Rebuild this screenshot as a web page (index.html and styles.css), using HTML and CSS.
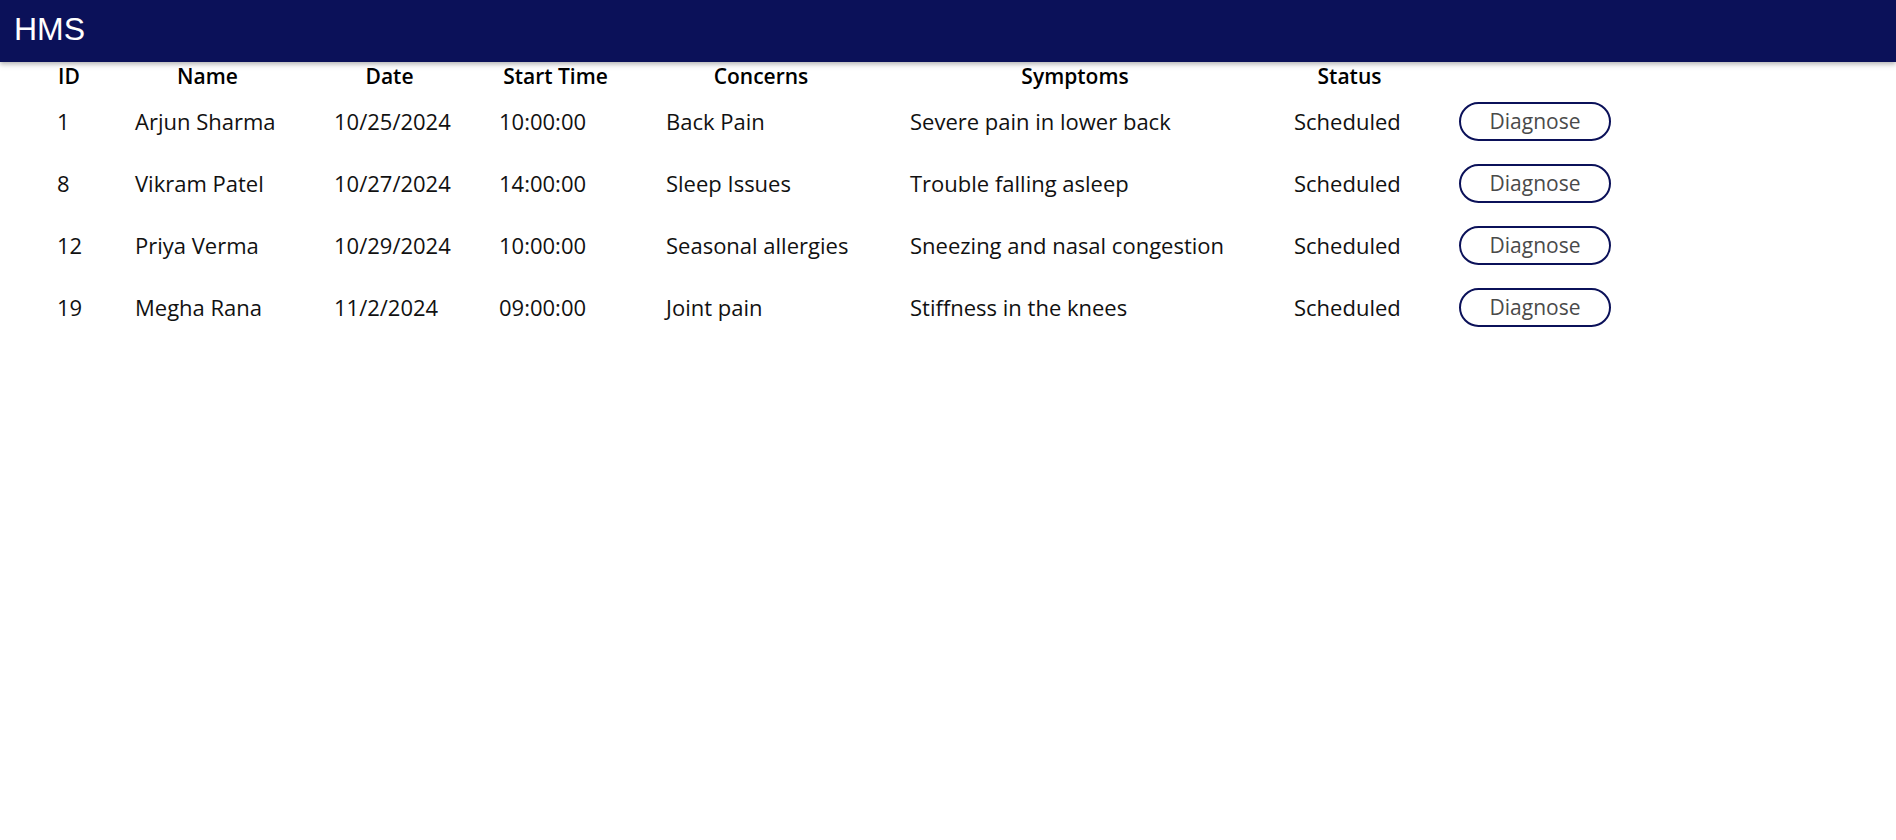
FILE: index.html
```html
<!DOCTYPE html>
<html lang="en">
<head>
<meta charset="utf-8">
<title>HMS</title>
<link rel="stylesheet" href="styles.css">
</head>
<body>
<header class="appbar">
  <span class="brand">HMS</span>
</header>
<main class="content">
  <table class="appts">
    <colgroup>
      <col class="c-id">
      <col class="c-name">
      <col class="c-date">
      <col class="c-time">
      <col class="c-concern">
      <col class="c-symptom">
      <col class="c-status">
      <col class="c-action">
    </colgroup>
    <thead>
      <tr>
        <th>ID</th>
        <th>Name</th>
        <th>Date</th>
        <th>Start Time</th>
        <th>Concerns</th>
        <th>Symptoms</th>
        <th>Status</th>
        <th></th>
      </tr>
    </thead>
    <tbody>
      <tr>
        <td>1</td>
        <td>Arjun Sharma</td>
        <td>10/25/2024</td>
        <td>10:00:00</td>
        <td>Back Pain</td>
        <td>Severe pain in lower back</td>
        <td>Scheduled</td>
        <td><button class="diag">Diagnose</button></td>
      </tr>
      <tr>
        <td>8</td>
        <td>Vikram Patel</td>
        <td>10/27/2024</td>
        <td>14:00:00</td>
        <td>Sleep Issues</td>
        <td>Trouble falling asleep</td>
        <td>Scheduled</td>
        <td><button class="diag">Diagnose</button></td>
      </tr>
      <tr>
        <td>12</td>
        <td>Priya Verma</td>
        <td>10/29/2024</td>
        <td>10:00:00</td>
        <td>Seasonal allergies</td>
        <td>Sneezing and nasal congestion</td>
        <td>Scheduled</td>
        <td><button class="diag">Diagnose</button></td>
      </tr>
      <tr>
        <td>19</td>
        <td>Megha Rana</td>
        <td>11/2/2024</td>
        <td>09:00:00</td>
        <td>Joint pain</td>
        <td>Stiffness in the knees</td>
        <td>Scheduled</td>
        <td><button class="diag">Diagnose</button></td>
      </tr>
    </tbody>
  </table>
</main>
</body>
</html>
```

FILE: styles.css
```css
html, body {
  margin: 0;
  padding: 0;
  background: #ffffff;
}

body {
  font-family: "Open Sans", "Noto Sans", sans-serif;
  color: #111111;
}

.appbar {
  height: 62px;
  box-sizing: border-box;
  padding: 11px 0 0 14px;
  background: #0b1159;
  box-shadow: 0 2px 4px rgba(0, 0, 0, 0.22), 0 4px 6px rgba(0, 0, 0, 0.08);
  position: relative;
  z-index: 1;
}

.brand {
  font-family: "Liberation Sans", Arial, sans-serif;
  font-size: 32px;
  line-height: 37px;
  color: #ffffff;
}

.content {
  padding-left: 30px;
}

.appts {
  border-collapse: collapse;
  table-layout: fixed;
  width: 1608px;
}

.c-id { width: 78px; }
.c-name { width: 199px; }
.c-date { width: 165px; }
.c-time { width: 167px; }
.c-concern { width: 244px; }
.c-symptom { width: 384px; }
.c-status { width: 165px; }
.c-action { width: 206px; }

.appts th,
.appts td {
  padding: 0 27px;
  white-space: nowrap;
  vertical-align: middle;
}

.appts th {
  height: 28px;
  font-size: 21px;
  font-weight: 600;
  text-align: center;
  color: #000000;
}

.appts td {
  height: 62px;
  font-size: 22px;
  font-weight: 400;
  text-align: left;
  color: #111111;
}

.diag {
  display: block;
  width: 152px;
  height: 39px;
  box-sizing: border-box;
  border: 2px solid #0b1159;
  border-radius: 20px;
  background: #ffffff;
  font-family: "Open Sans", "Noto Sans", sans-serif;
  font-size: 21px;
  color: #4a4a4a;
  padding: 0;
  cursor: pointer;
}
```
